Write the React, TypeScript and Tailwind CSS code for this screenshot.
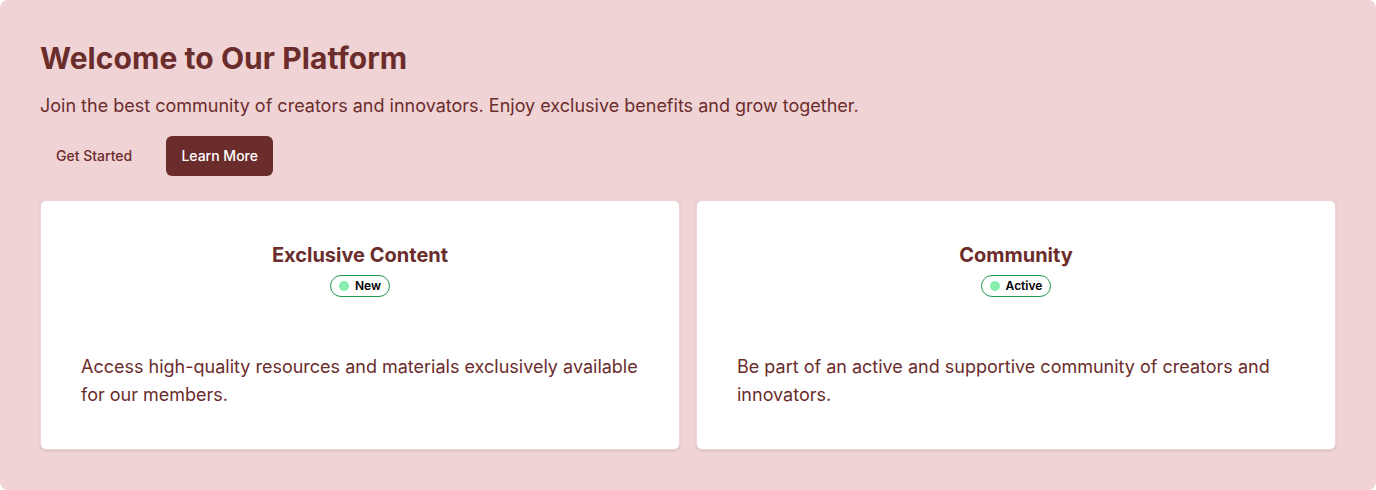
export default function App() {
  const cards = [
    {
      title: "Exclusive Content",
      badge: "New",
      text: "Access high-quality resources and materials exclusively available for our members.",
    },
    {
      title: "Community",
      badge: "Active",
      text: "Be part of an active and supportive community of creators and innovators.",
    },
  ];
  return (
    <div className="bg-white" style={{ fontFamily: "Inter, 'Noto Sans', sans-serif" }}>
      <div className="bg-[#f0d4d5] rounded-lg p-10 h-[490px] text-[#6b2c2c]">
        <h1 className="text-3xl font-bold leading-9 tracking-[0.002em] text-[#6b2c2c]">Welcome to Our Platform</h1>
        <p className="text-lg leading-7 mt-4 text-[#6b2c2c]">
          Join the best community of creators and innovators. Enjoy exclusive benefits and grow together.
        </p>
        <div className="flex gap-[18px] mt-4">
          <button className="h-10 px-4 rounded-md text-sm font-medium text-[#6b2c2c]">Get Started</button>
          <button className="h-10 w-[107px] rounded-md text-sm font-medium bg-[#6b2c2c] text-white">Learn More</button>
        </div>
        <div className="grid grid-cols-2 gap-4 mt-6">
          {cards.map((c) => (
            <div key={c.title} className="bg-white rounded-md shadow-sm border border-[#ead6d6] h-[250px] px-10 pt-10">
              <div className="flex flex-col items-center">
                <h3 className="text-xl font-bold leading-7 text-[#6b2c2c]">{c.title}</h3>
                <span className="mt-1.5 inline-flex items-center gap-1.5 h-[22px] px-2 rounded-full border border-[#1f9a4e] text-xs font-semibold text-black">
                  <span className="w-2.5 h-2.5 rounded-full bg-[#86efac]" />
                  {c.badge}
                </span>
              </div>
              <p className="mt-14 text-lg leading-7 text-[#6b2c2c]">{c.text}</p>
            </div>
          ))}
        </div>
      </div>
    </div>
  );
}
